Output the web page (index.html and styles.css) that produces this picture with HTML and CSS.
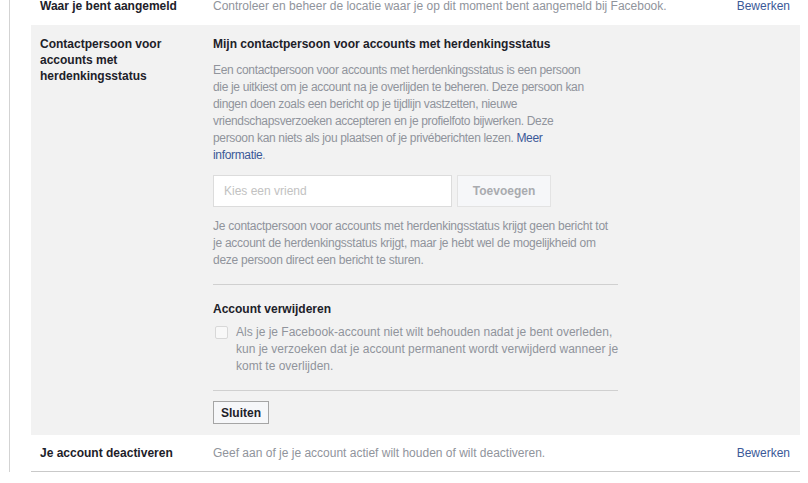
FILE: index.html
```html
<!DOCTYPE html>
<html lang="nl">
<head>
    <meta charset="UTF-8">
    <meta name="viewport" content="width=device-width, initial-scale=1.0">
    <title>Beveiligingsinstellingen</title>
    <link rel="stylesheet" href="styles.css">
</head>
<body>

    <div class="page">

        <div class="row row-first">
            <div class="label">Waar je bent aangemeld</div>
            <div class="desc">Controleer en beheer de locatie waar je op dit moment bent aangemeld bij Facebook.</div>
            <a class="edit" href="#">Bewerken</a>
        </div>

        <div class="row row-open">
            <div class="label">Contactpersoon voor accounts met herdenkingsstatus</div>
            <div class="content">
                <h3>Mijn contactpersoon voor accounts met herdenkingsstatus</h3>
                <p class="intro">Een contactpersoon voor accounts met herdenkingsstatus is een persoon<br>
                die je uitkiest om je account na je overlijden te beheren. Deze persoon kan<br>
                dingen doen zoals een bericht op je tijdlijn vastzetten, nieuwe<br>
                vriendschapsverzoeken accepteren en je profielfoto bijwerken. Deze<br>
                persoon kan niets als jou plaatsen of je privéberichten lezen. <a href="#">Meer<br>
                informatie</a>.</p>

                <div class="picker">
                    <input type="text" class="friend" placeholder="Kies een vriend">
                    <button class="add" disabled>Toevoegen</button>
                </div>

                <p class="note">Je contactpersoon voor accounts met herdenkingsstatus krijgt geen bericht tot<br>
                je account de herdenkingsstatus krijgt, maar je hebt wel de mogelijkheid om<br>
                deze persoon direct een bericht te sturen.</p>

                <hr>

                <h3>Account verwijderen</h3>
                <div class="check">
                    <span class="box"></span>
                    <p>Als je je Facebook-account niet wilt behouden nadat je bent overleden,<br>
                    kun je verzoeken dat je account permanent wordt verwijderd wanneer je<br>
                    komt te overlijden.</p>
                </div>

                <hr>

                <button class="close">Sluiten</button>
            </div>
        </div>

        <div class="row row-last">
            <div class="label">Je account deactiveren</div>
            <div class="desc">Geef aan of je je account actief wilt houden of wilt deactiveren.</div>
            <a class="edit" href="#">Bewerken</a>
        </div>

    </div>

</body>
</html>
```

FILE: styles.css
```css
body {
    font-family: "Liberation Sans", Arial, sans-serif;
    font-size: 12px;
    line-height: 16px;
    color: #1d2129;
    margin: 0;
    padding: 0;
    background-color: #fff;
    overflow: hidden;
}

.page {
    margin-left: 9px;
    border-left: 1px solid #d3d3d3;
    padding: 0 8px 0 21px;
    min-height: 100vh;
}

.row {
    display: grid;
    grid-template-columns: 173px 1fr auto;
    padding: 11px 10px 11px 9px;
}

.row-first {
    margin-top: -13px;
}

.row-open {
    background-color: #f2f2f2;
    padding-bottom: 11px;
}

.row-last {
    padding-top: 10px;
    padding-bottom: 10px;
    border-bottom: 1px solid #c9c9c9;
}

.label {
    font-weight: bold;
    padding-right: 10px;
}

.desc {
    color: #90949c;
}

.edit {
    color: #3b5998;
    text-decoration: none;
}

.content {
    grid-column: 2 / 4;
    width: 405px;
}

h3 {
    font-size: 12px;
    line-height: 16px;
    margin: 0;
}

p {
    margin: 0;
    white-space: nowrap;
}

.intro {
    color: #90949c;
    line-height: 17px;
    margin-top: 10px;
    letter-spacing: -0.34px;
}

.intro a {
    color: #3b5998;
    text-decoration: none;
}

.picker {
    display: flex;
    gap: 5px;
    margin-top: 11px;
}

.friend {
    width: 239px;
    height: 32px;
    box-sizing: border-box;
    border: 1px solid #dcdcdc;
    padding: 0 10px;
    font-family: inherit;
    font-size: 12px;
    outline: none;
}

.friend::placeholder {
    color: #c2c2c2;
}

.add {
    width: 94px;
    height: 32px;
    background-color: #f6f7f9;
    border: 1px solid #e3e3e3;
    color: #a9abaf;
    font-family: inherit;
    font-size: 12px;
    font-weight: bold;
    padding: 0;
}

.note {
    color: #90949c;
    line-height: 17px;
    margin-top: 11px;
    letter-spacing: -0.26px;
}

hr {
    border: none;
    border-top: 1px solid #d0d0d0;
    margin: 15px 0 16px;
}

.check {
    display: flex;
    gap: 8px;
    margin-top: 7px;
    padding-left: 2px;
}

.box {
    flex: none;
    width: 11px;
    height: 11px;
    margin-top: 2px;
    border: 1px solid #d8d8d8;
    border-radius: 2px;
    background-color: #f8f8f8;
}

.check p {
    color: #90949c;
    line-height: 17px;
}

.close {
    display: block;
    height: 23px;
    width: 56px;
    margin-top: -6px;
    background-color: #f6f7f9;
    border: 1px solid #a5a5a5;
    color: #1d2129;
    font-family: inherit;
    font-size: 12px;
    font-weight: bold;
    padding: 0;
}
```
